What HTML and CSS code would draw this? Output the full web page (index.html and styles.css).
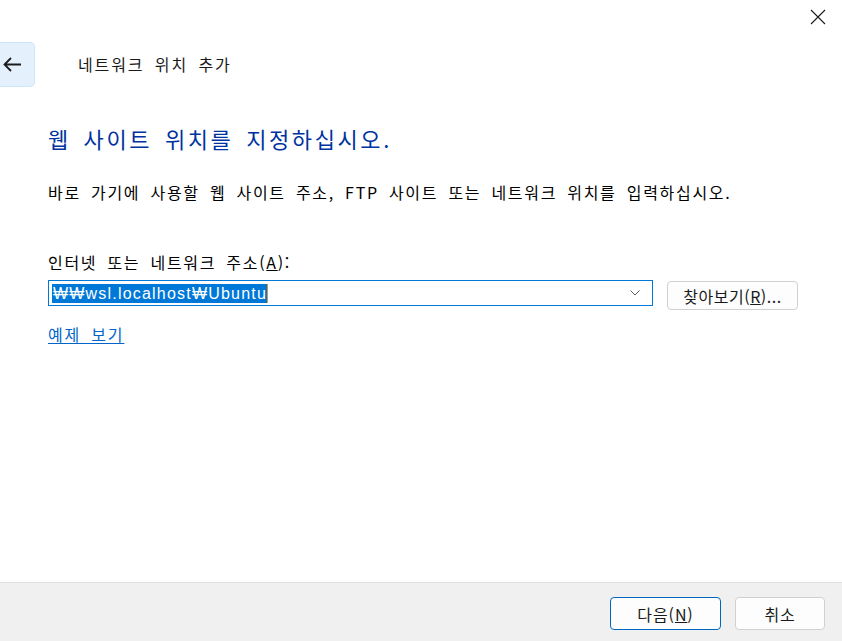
FILE: index.html
```html
<!DOCTYPE html>
<html lang="ko">
<head>
<meta charset="utf-8">
<title>네트워크 위치 추가</title>
<link rel="stylesheet" href="styles.css">
</head>
<body>
<div class="window">
  <div class="titlebar">
    <button class="close" aria-label="닫기">
      <svg width="16" height="16" viewBox="0 0 16 16"><path d="M1 1L15 15M15 1L1 15" stroke="#1a1a1a" stroke-width="1.1" fill="none"/></svg>
    </button>
  </div>
  <div class="nav">
    <button class="back" aria-label="뒤로">
      <svg width="19" height="17" viewBox="0 0 19 17"><path d="M18 8.5H1.5M8 2L1.5 8.5L8 15" stroke="#1c1c1c" stroke-width="1.8" fill="none"/></svg>
    </button>
    <span class="nav-title">네트워크 위치 추가</span>
  </div>
  <main class="content">
    <h1 class="heading">웹 사이트 위치를 지정하십시오.</h1>
    <p class="desc">바로 가기에 사용할 웹 사이트 주소, FTP 사이트 또는 네트워크 위치를 입력하십시오.</p>
    <div class="label">인터넷 또는 네트워크 주소(<u>A</u>):</div>
    <div class="row">
      <div class="combo">
        <span class="sel">₩₩wsl.localhost₩Ubuntu</span>
        <svg class="chev" width="10" height="6" viewBox="0 0 10 6"><path d="M0.5 0.5L5 5L9.5 0.5" stroke="#606060" stroke-width="1" fill="none"/></svg>
      </div>
      <button class="btn browse">찾아보기(<u>R</u>)...</button>
    </div>
    <a class="link" href="#">예제 보기</a>
  </main>
  <footer class="footer">
    <button class="btn next">다음(<u>N</u>)</button>
    <button class="btn cancel">취소</button>
  </footer>
</div>
</body>
</html>
```
FILE: styles.css
```css
* { box-sizing: border-box; }
html, body { margin: 0; padding: 0; }
body {
  width: 842px;
  height: 641px;
  background: #ffffff;
  font-family: "Noto Sans CJK KR", "Noto Sans", sans-serif;
  color: #000;
  overflow: hidden;
}
.window {
  display: flex;
  flex-direction: column;
  height: 641px;
}
.titlebar {
  height: 42px;
  display: flex;
  justify-content: flex-end;
  align-items: flex-start;
}
.close {
  border: 0;
  background: transparent;
  padding: 0;
  margin: 9px 16px 0 0;
  width: 16px;
  height: 16px;
  display: flex;
}
.nav {
  height: 45px;
  display: flex;
  align-items: center;
}
.back {
  width: 35px;
  height: 45px;
  border: 1px solid #cde5f8;
  border-left: 0;
  border-radius: 0 5px 5px 0;
  background: #e4f1fc;
  padding: 0 0 0 3px;
  display: flex;
  align-items: center;
}
.nav-title {
  margin-left: 43px;
  font-size: 16px;
  letter-spacing: 1.9px;
  word-spacing: 4px;
  line-height: 20px;
  color: #1a1a1a;
  margin-top: -1px;
}
.content {
  flex: 1;
  padding: 37px 0 0 48px;
  display: flex;
  flex-direction: column;
  align-items: flex-start;
}
.heading {
  margin: 0;
  font-weight: normal;
  font-size: 22px;
  line-height: 28px;
  letter-spacing: 2.6px;
  word-spacing: 4px;
  color: #0033a0;
}
.desc {
  margin: 30px 0 0 0;
  font-size: 16px;
  line-height: 20px;
  letter-spacing: 1.7px;
  word-spacing: 4px;
}
.label {
  margin-top: 50px;
  font-size: 16px;
  line-height: 20px;
  letter-spacing: 1.7px;
  word-spacing: 4px;
}
.row {
  margin-top: 8px;
  display: flex;
  align-items: flex-start;
  gap: 14px;
}
.combo {
  width: 605px;
  height: 26px;
  border: 1px solid #0078d7;
  display: flex;
  align-items: center;
  justify-content: space-between;
  padding: 0 12px 0 3px;
}
.sel {
  background: #0078d7;
  color: #fff;
  font-family: "Liberation Sans", "Noto Sans CJK KR", sans-serif;
  font-size: 16px;
  line-height: 19px;
  padding: 0 0 0 1px;
  letter-spacing: 1.2px;
  border-right: 1px solid #e8902a;
}
.btn {
  font-family: "Noto Sans CJK KR", "Noto Sans", sans-serif;
  font-size: 16px;
  color: #1a1a1a;
  background: #fdfdfd;
  border: 1px solid #d0d0d0;
  border-radius: 4px;
  padding: 0;
  line-height: 20px;
  letter-spacing: 0.9px;
}
.browse {
  margin-top: 1px;
  width: 131px;
  height: 29px;
  letter-spacing: 0.5px;
}
.link {
  margin-top: 14px;
  font-size: 16px;
  line-height: 20px;
  letter-spacing: 1.8px;
  word-spacing: 4px;
  color: #0066cc;
  text-decoration: underline;
  text-underline-offset: 2px;
}
.footer {
  height: 59px;
  background: #f0f0f0;
  border-top: 1px solid #dfdfdf;
  display: flex;
  justify-content: flex-end;
  align-items: flex-start;
  padding: 14px 17px 0 0;
  gap: 14px;
}
.next {
  width: 111px;
  height: 33px;
  border-color: #0067c0;
}
.cancel {
  width: 90px;
  height: 33px;
}
```
